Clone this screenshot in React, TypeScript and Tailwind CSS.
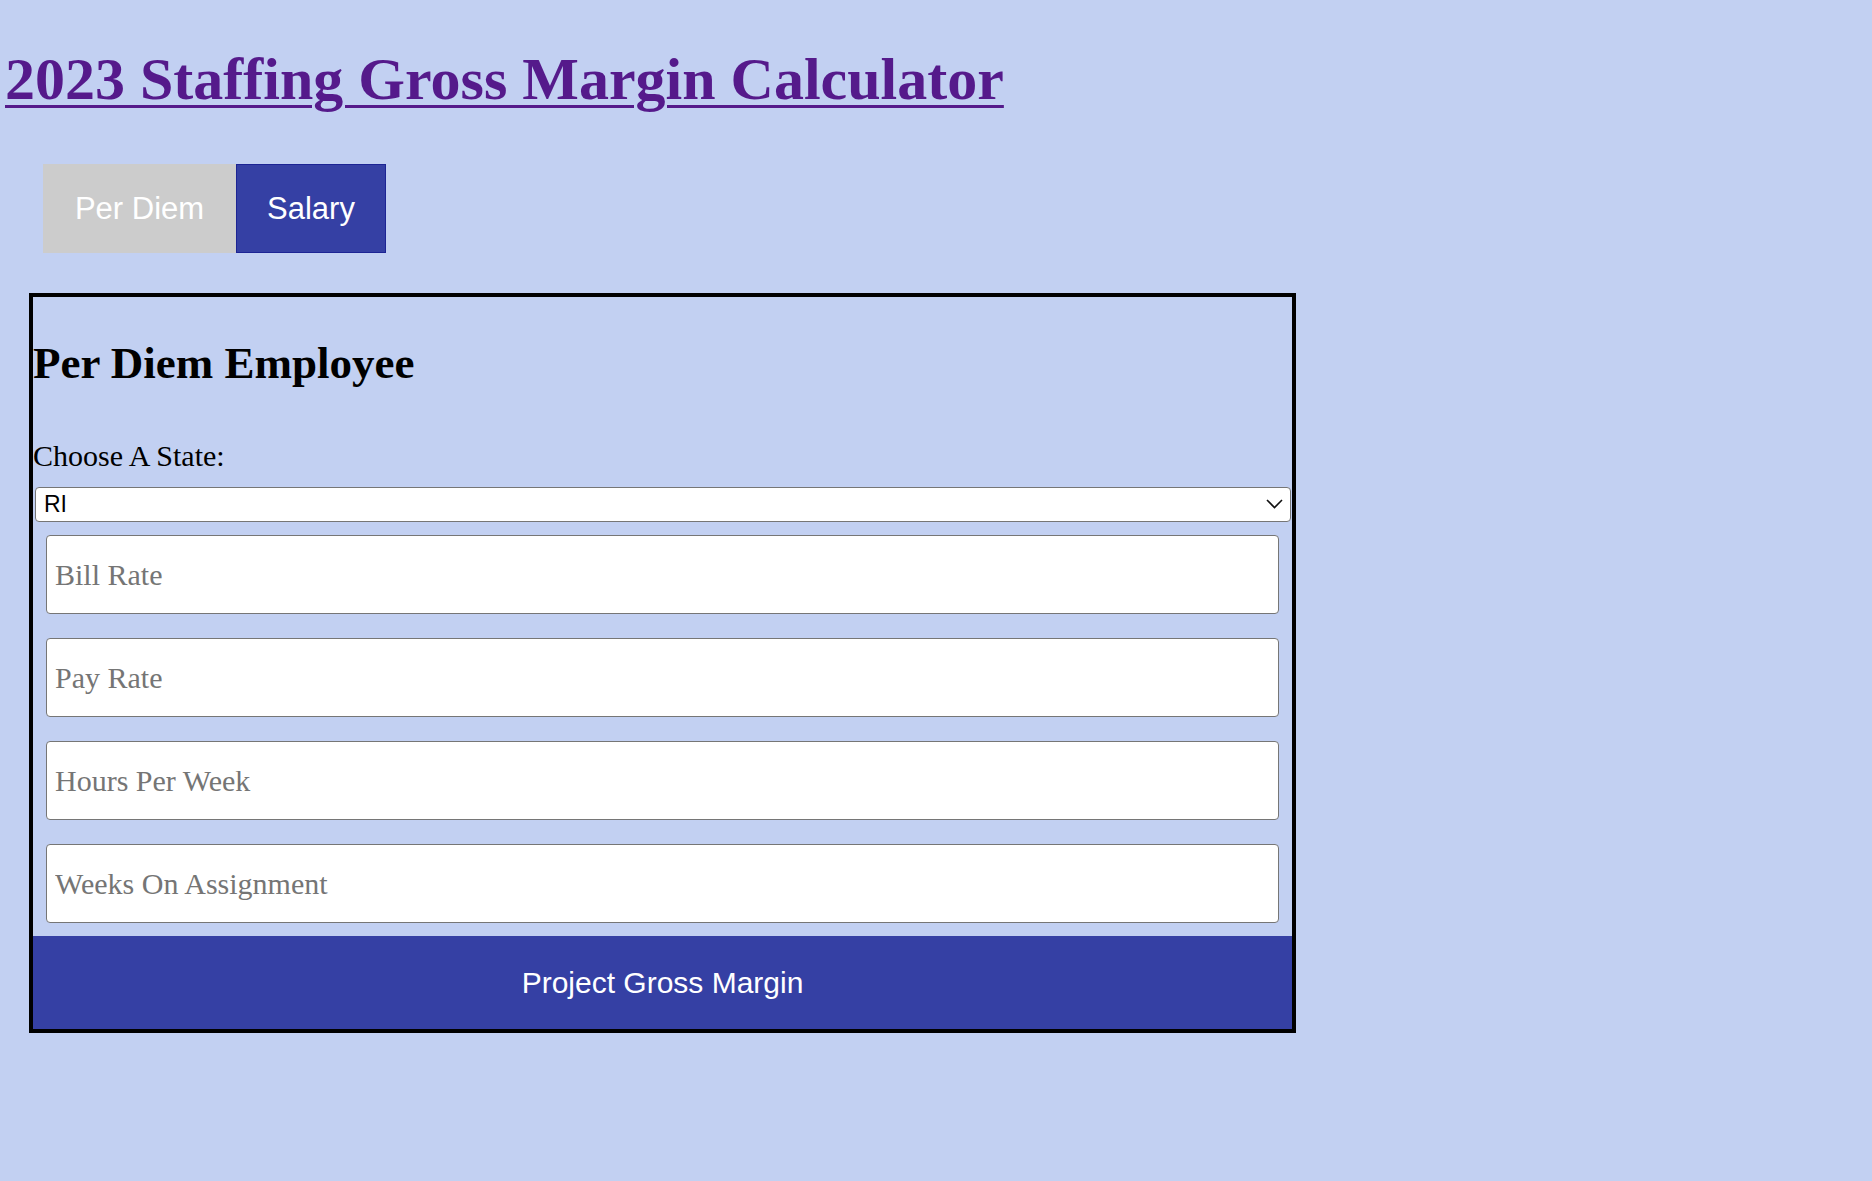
import React from "react";

export default function App() {
  const fields = ["Bill Rate", "Pay Rate", "Hours Per Week", "Weeks On Assignment"];
  return (
    <div className="min-h-screen w-full bg-[#c2d0f2] font-['Liberation_Serif','Times_New_Roman',serif] text-black">
      <h1 className="pt-[46px] pl-[5px] text-[60px] leading-[67px] font-bold m-0">
        <a
          href="#"
          className="text-[#551a8b] underline decoration-[3px] underline-offset-[6px]"
        >
          2023 Staffing Gross Margin Calculator
        </a>
      </h1>

      <div className="mt-[51px] ml-[43px] flex font-['Liberation_Sans',Arial,sans-serif] text-[31px] text-white">
        <button className="h-[89px] w-[193px] flex items-center justify-center bg-[#cccccc] leading-none">
          Per Diem
        </button>
        <button className="h-[89px] w-[150px] flex items-center justify-center bg-[#3540a4] border border-[#1c2494] leading-none">
          Salary
        </button>
      </div>

      <div className="mt-[40px] ml-[29px] w-[1267px] border-4 border-black">
        <h2 className="pt-[40px] text-[45px] leading-[52px] font-bold m-0">Per Diem Employee</h2>
        <label className="block mt-[49px] text-[30px] leading-[35px]">Choose A State:</label>
        <div className="relative mt-[14px] ml-[2px] mr-[1px]">
          <select
            defaultValue="RI"
            className="block w-full h-[35px] appearance-none bg-white border border-[#767676] rounded-[4px] pl-[8px] font-['Liberation_Sans',Arial,sans-serif] text-[23px] leading-none text-black outline-none"
          >
            <option value="RI">RI</option>
            <option value="MA">MA</option>
            <option value="CT">CT</option>
          </select>
          <svg
            className="pointer-events-none absolute right-[8px] top-[12px]"
            width="17"
            height="10"
            viewBox="0 0 17 10"
            fill="none"
          >
            <path d="M1 1 L8.5 8.5 L16 1" stroke="#111" strokeWidth="1.6" />
          </svg>
        </div>
        <div className="mt-[13px] mx-[13px] flex flex-col gap-[24px]">
          {fields.map((f) => (
            <input
              key={f}
              type="text"
              placeholder={f}
              className="block w-full h-[79px] bg-white border border-[#767676] rounded-[4px] pl-[8px] text-[30px] font-['Liberation_Serif','Times_New_Roman',serif] text-black placeholder:text-[#757575] outline-none"
            />
          ))}
        </div>
        <button className="mt-[13px] w-full h-[93px] flex items-center justify-center bg-[#3540a4] text-white font-['Liberation_Sans',Arial,sans-serif] text-[30px] leading-none">
          Project Gross Margin
        </button>
      </div>
    </div>
  );
}
